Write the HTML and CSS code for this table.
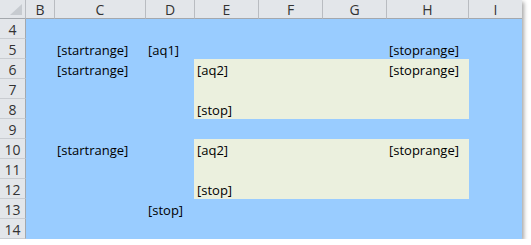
FILE: index.html
```html
<!DOCTYPE html>
<html>
<head>
<meta charset="utf-8">
<link rel="stylesheet" href="styles.css">
</head>
<body>
<div class="sheet">
  <div class="hdr corner"><span class="tri"></span></div>
  <div class="hdr col">B</div>
  <div class="hdr col">C</div>
  <div class="hdr col">D</div>
  <div class="hdr col">E</div>
  <div class="hdr col">F</div>
  <div class="hdr col">G</div>
  <div class="hdr col">H</div>
  <div class="hdr col last">I</div>

  <div class="hdr rowh r2">4</div>
  <div class="hdr rowh r3">5</div>
  <div class="hdr rowh r4">6</div>
  <div class="hdr rowh r5">7</div>
  <div class="hdr rowh r6">8</div>
  <div class="hdr rowh r7">9</div>
  <div class="hdr rowh r8">10</div>
  <div class="hdr rowh r9">11</div>
  <div class="hdr rowh r10">12</div>
  <div class="hdr rowh r11">13</div>
  <div class="hdr rowh r12">14</div>

  <div class="fill fill-a"></div>
  <div class="fill fill-b"></div>

  <div class="cell cC r3">[startrange]</div>
  <div class="cell cD r3">[aq1]</div>
  <div class="cell cH r3">[stoprange]</div>

  <div class="cell cC r4">[startrange]</div>
  <div class="cell cE r4">[aq2]</div>
  <div class="cell cH r4">[stoprange]</div>
  <div class="cell cE r6">[stop]</div>

  <div class="cell cC r8">[startrange]</div>
  <div class="cell cE r8">[aq2]</div>
  <div class="cell cH r8">[stoprange]</div>
  <div class="cell cE r10">[stop]</div>

  <div class="cell cD r11">[stop]</div>
</div>
</body>
</html>
```
FILE: styles.css
```css
html, body {
  margin: 0;
  padding: 0;
  background: #ffffff;
}

.sheet {
  display: grid;
  grid-template-columns: 26px 29px 91px 49px 64px 64px 64px 82px 53px;
  grid-template-rows: 19px repeat(11, 20px);
  width: 522px;
  background: #99ccff;
  box-shadow: 2px 2px 4px rgba(0, 0, 0, 0.35);
  font-family: "Open Sans", "Noto Sans", sans-serif;
  font-size: 13px;
  color: #000;
}

.hdr {
  box-sizing: border-box;
  background: #e3e6ea;
  color: #333;
  display: flex;
  align-items: center;
  justify-content: center;
  font-size: 14px;
}

.col {
  grid-row: 1;
  border-right: 1px solid #b9bcc1;
  border-bottom: 1px solid #a4a8ad;
}

.col.last {
  border-right: none;
}

.corner {
  grid-row: 1;
  grid-column: 1;
  border-right: 1px solid #b9bcc1;
  border-bottom: 1px solid #a4a8ad;
  position: relative;
}

.tri {
  position: absolute;
  right: 3px;
  bottom: 3px;
  width: 0;
  height: 0;
  border-left: 12px solid transparent;
  border-bottom: 11px solid #c7cbd0;
}

.rowh {
  grid-column: 1;
  border-right: 1px solid #a4a8ad;
  border-bottom: 1px solid #c9ccd1;
  padding-top: 2px;
}

.r2 { grid-row: 2; }
.r3 { grid-row: 3; }
.r4 { grid-row: 4; }
.r5 { grid-row: 5; }
.r6 { grid-row: 6; }
.r7 { grid-row: 7; }
.r8 { grid-row: 8; }
.r9 { grid-row: 9; }
.r10 { grid-row: 10; }
.r11 { grid-row: 11; }
.r12 { grid-row: 12; }

.fill {
  background: #ebf0de;
  grid-column: 5 / 9;
  margin-left: -1px;
}

.fill-a { grid-row: 4 / 7; }
.fill-b { grid-row: 8 / 11; }

.cell {
  display: flex;
  align-items: flex-end;
  padding-left: 2px;
  padding-bottom: 1px;
  white-space: nowrap;
  line-height: 16px;
}

.cC { grid-column: 3; }
.cD { grid-column: 4; }
.cE { grid-column: 5; }
.cH { grid-column: 8; }
```
